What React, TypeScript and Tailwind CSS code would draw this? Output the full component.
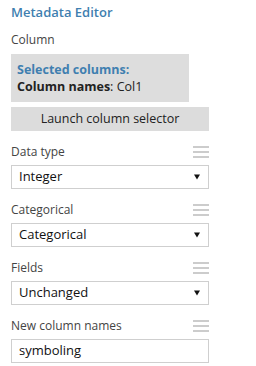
import { Fragment } from 'react';

const fields = [
  { label: 'Data type', value: 'Integer', kind: 'select' },
  { label: 'Categorical', value: 'Categorical', kind: 'select' },
  { label: 'Fields', value: 'Unchanged', kind: 'select' },
  { label: 'New column names', value: 'symboling', kind: 'input' },
];

const DragHandle = () => (
  <div className="flex w-[16px] flex-col gap-[3px]">
    <span className="h-[2px] bg-[#cccccc]" />
    <span className="h-[2px] bg-[#cccccc]" />
    <span className="h-[2px] bg-[#cccccc]" />
  </div>
);

const Caret = () => (
  <svg width="6" height="6" viewBox="0 0 6 6" className="shrink-0">
    <path d="M0 0.5 H6 L3 5.5 Z" fill="#111" />
  </svg>
);

export default function App() {
  return (
    <div className="h-[366px] w-[256px] overflow-hidden bg-white pl-[11px] font-['Open_Sans',sans-serif] text-[#333]">
      <h1 className="pt-[3px] text-[13px] font-semibold leading-[18px] text-[#3f7fb0]">
        Metadata Editor
      </h1>

      <div className="mt-[11px] text-[12px] leading-[16px] text-[#444]">Column</div>

      <div className="mt-[6px] flex h-[48px] w-[178px] flex-col justify-center bg-[#dddddd] px-[6px] text-[12.5px] leading-[17px]">
        <div className="font-bold text-[#3f7fb0]">Selected columns:</div>
        <div className="text-[#222]">
          <span className="font-bold">Column names</span>: Col1
        </div>
      </div>

      <button className="mt-[5px] flex h-[24px] w-[198px] items-center justify-center bg-[#dcdcdc] text-[12.5px] text-[#222]">
        Launch column selector
      </button>

      {fields.map((f, i) => (
        <Fragment key={f.label}>
          <div
            className={`flex w-[198px] items-center justify-between ${
              i === 0 ? 'mt-[13px]' : 'mt-[13px]'
            }`}
          >
            <span className="text-[12px] leading-[16px] text-[#444]">{f.label}</span>
            <DragHandle />
          </div>
          <div className="mt-[5px] flex h-[24px] w-[198px] items-center justify-between border border-[#cfcfcf] bg-white pl-[7px] pr-[8px] text-[13px] text-[#111]">
            <span>{f.value}</span>
            {f.kind === 'select' && <Caret />}
          </div>
        </Fragment>
      ))}
    </div>
  );
}
